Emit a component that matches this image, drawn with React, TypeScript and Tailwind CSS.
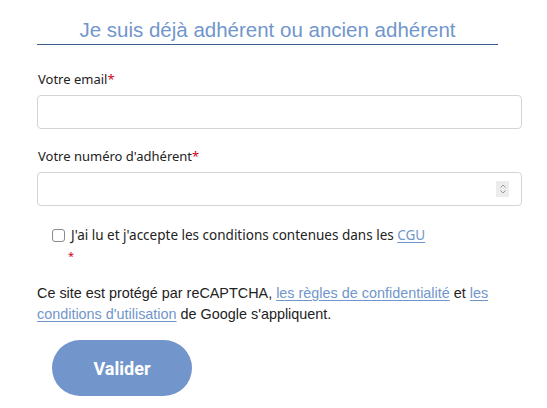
export default function App() {
  return (
    <div className="min-h-screen bg-white pl-[37px] pt-[18px]">
      <div className="w-[485px]">
        <h2 className="w-[461px] border-b border-[#3e5f8e] pb-[2px] text-center font-['Liberation_Sans',Arial,sans-serif] text-[20.5px] leading-[24px] text-[#7196cb]">
          Je suis déjà adhérent ou ancien adhérent
        </h2>

        <div className="mt-[24px] font-['Noto_Sans','Open_Sans',sans-serif] text-[13.5px] text-[#222]">
          <label className="block pl-[1px] text-[13px] leading-[20px]">
            Votre email<span className="text-[#d0021b]">*</span>
          </label>
          <input
            type="email"
            className="mt-[6px] block h-[34px] w-full rounded-[4px] border border-[#d4d4d4] bg-white px-3 outline-none"
          />

          <label className="mt-[17px] block pl-[1px] text-[13px] leading-[20px]">
            Votre numéro d'adhérent<span className="text-[#d0021b]">*</span>
          </label>
          <div className="relative mt-[6px]">
            <input
              type="text"
              className="block h-[34px] w-full rounded-[4px] border border-[#d4d4d4] bg-white px-3 outline-none"
            />
            <div className="absolute right-[13px] top-[9px] flex h-[16px] w-[13px] flex-col items-center justify-center bg-[#ececec]">
              <svg width="8" height="12" viewBox="0 0 8 12" fill="none" stroke="#9a9a9a" strokeWidth="1">
                <path d="M1.5 4.5 L4 2 L6.5 4.5" />
                <path d="M1.5 7.5 L4 10 L6.5 7.5" />
              </svg>
            </div>
          </div>

          <div className="mt-[19px] flex items-center pl-[15px] leading-[20px]">
            <span className="mr-[6px] inline-block h-[13px] w-[13px] rounded-[3px] border border-[#8a8a8a] bg-white" />
            <span>
              J'ai lu et j'accepte les conditions contenues dans les{' '}
              <a href="#" className="text-[#7196cb] underline underline-offset-2">
                CGU
              </a>
            </span>
          </div>
          <div className="mt-[4px] pl-[31px] text-[11px] leading-[14px] text-[#d0021b]">*</div>
        </div>

        <p className="mt-[20px] font-['Liberation_Sans',Arial,sans-serif] text-[14.4px] leading-[21px] text-[#222]">
          Ce site est protégé par reCAPTCHA,{' '}
          <a href="#" className="text-[#7196cb] underline underline-offset-2">
            les règles de confidentialité
          </a>{' '}
          et{' '}
          <a href="#" className="text-[#7196cb] underline underline-offset-2">
            les conditions d'utilisation
          </a>{' '}
          de Google s'appliquent.
        </p>

        <button
          type="button"
          className="ml-[15px] mt-[15px] h-[56px] w-[140px] rounded-full bg-[#7296cb] font-['Roboto',sans-serif] text-[18px] font-bold text-white"
        >
          Valider
        </button>
      </div>
    </div>
  )
}
